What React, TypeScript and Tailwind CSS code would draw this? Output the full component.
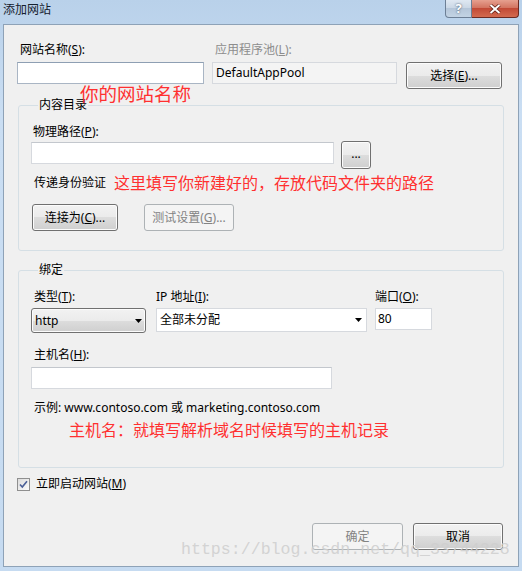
import React from "react";

const Arrow = () => (
  <svg width="7" height="4" viewBox="0 0 7 4" className="shrink-0">
    <path d="M0 0h7L3.5 4z" fill="#000" />
  </svg>
);

const Btn = ({
  children,
  className = "",
  disabled = false,
}: {
  children: React.ReactNode;
  className?: string;
  disabled?: boolean;
}) => (
  <button
    disabled={disabled}
    className={
      disabled
        ? `flex items-center justify-center rounded-[3px] border border-[#adb2b5] bg-[#f4f4f4] text-[#838383] ${className}`
        : `flex items-center justify-center rounded-[3px] border border-[#707070] bg-[linear-gradient(#f2f2f2,#ebebeb_50%,#dddddd_50%,#cfcfcf)] shadow-[inset_0_0_0_1px_#fcfcfc] text-black ${className}`
    }
  >
    {children}
  </button>
);

export default function App() {
  return (
    <div className="relative flex h-[571px] w-[522px] flex-col overflow-hidden bg-[linear-gradient(#b9d1ea,#cadef3_20%,#c6dbf1)] font-['Noto_Sans','Noto_Sans_CJK_SC',sans-serif] text-[12px] text-black">
      {/* title bar */}
      <div className="flex h-[24px] items-start">
        <span className="ml-[3px] mt-[2px] leading-[16px] text-[#15202e]">添加网站</span>
        <div className="ml-auto mr-[3px] flex">
          <div className="flex h-[18px] w-[27px] items-center justify-center rounded-bl-[4px] border border-t-0 border-[#6d7f95] bg-[linear-gradient(#dfe8f2,#c9d6e4_50%,#b5c6d9_50%,#c3d3e4)] text-[13px] font-bold leading-none text-white [text-shadow:0_0_2px_#2c3e55]">
            ?
          </div>
          <div className="flex h-[18px] w-[47px] items-center justify-center rounded-br-[4px] border border-l-0 border-t-0 border-[#6b2a22] bg-[linear-gradient(#e6a08f,#d1705c_50%,#c24a36_50%,#d36a4f)]">
            <svg width="12" height="10" viewBox="0 0 12 10">
              <path d="M1.5 1l9 8M10.5 1l-9 8" stroke="#5a1a10" strokeWidth="3.4" />
              <path d="M1.5 1l9 8M10.5 1l-9 8" stroke="#fff" strokeWidth="2" />
            </svg>
          </div>
        </div>
      </div>

      {/* client area */}
      <div className="mx-[3px] mb-[4px] flex-1 border border-[#8ea2b7] bg-[#f0f0f0] pl-[13px] pr-[15px] pt-[17px]">
        {/* name / app pool */}
        <div className="flex">
          <div className="flex w-[187px] flex-col">
            <span className="pl-[3px] leading-[16px]">
              网站名称(<u>S</u>):
            </span>
            <div className="mt-[4px] h-[22px] border border-[#a9b5c4] border-t-[#8e9fb3] bg-white" />
          </div>
          <div className="ml-[8px] flex w-[185px] flex-col">
            <span className="pl-[3px] leading-[16px] text-[#8d8d8d]">
              应用程序池(<u>L</u>):
            </span>
            <div className="mt-[4px] flex h-[22px] items-center border border-[#d6d9de] bg-[#f4f4f4] pl-[3px]">
              DefaultAppPool
            </div>
          </div>
          <div className="ml-[9px] w-[96px]">
            <Btn className="mt-[20px] h-[27px] w-[96px]">
              选择(<u>E</u>)...
            </Btn>
          </div>
        </div>

        {/* content directory */}
        <fieldset className="ml-[1px] mt-[8px] w-[486px] rounded-[3px] border border-[#d5dfe5] pb-[19px] pl-[12px]">
          <legend className="ml-[7px] px-[1px] leading-[16px]">内容目录</legend>
          <div className="pl-[2px] pt-[11px] leading-[16px]">
            物理路径(<u>P</u>):
          </div>
          <div className="mt-[1px] flex items-start">
            <div className="mt-[1px] h-[22px] w-[303px] border border-[#d6d9de] border-t-[#c3c7cd] bg-white" />
            <Btn className="ml-[7px] h-[28px] w-[30px] pb-[3px] leading-none">...</Btn>
          </div>
          <div className="mt-[3px] flex h-[22px] items-center">
            <span className="ml-[3px] leading-[16px]">传递身份验证</span>
            <span className="ml-[8px] text-[16px] leading-[22px] text-[#ff3030]">
              这里填写你新建好的，存放代码文件夹的路径
            </span>
          </div>
          <div className="mt-[10px] flex">
            <Btn className="ml-[1px] h-[27px] w-[86px]">
              连接为(<u>C</u>)...
            </Btn>
            <Btn disabled className="ml-[26px] h-[27px] w-[90px]">
              测试设置(<u>G</u>)...
            </Btn>
          </div>
        </fieldset>

        {/* binding */}
        <fieldset className="ml-[1px] mt-[11px] w-[486px] rounded-[3px] border border-[#d5dfe5] pb-[26px] pl-[12px]">
          <legend className="ml-[7px] px-[1px] leading-[16px]">绑定</legend>
          <div className="flex pt-[11px]">
            <div className="flex w-[115px] flex-col">
              <span className="pl-[3px] leading-[16px]">
                类型(<u>T</u>):
              </span>
              <div className="mt-[3px] flex h-[25px] items-center justify-between rounded-[3px] border border-[#707070] bg-[linear-gradient(#f2f2f2,#ebebeb_50%,#dddddd_50%,#cfcfcf)] pl-[3px] pr-[3px] shadow-[inset_0_0_0_1px_#fcfcfc]">
                <span>http</span>
                <Arrow />
              </div>
            </div>
            <div className="ml-[10px] flex w-[211px] flex-col">
              <span className="leading-[16px]">
                IP 地址(<u>I</u>):
              </span>
              <div className="mt-[3px] flex h-[24px] items-center justify-between border border-[#d6d9de] bg-white pl-[3px] pr-[4px]">
                <span>全部未分配</span>
                <Arrow />
              </div>
            </div>
            <div className="ml-[8px] flex w-[57px] flex-col">
              <span className="leading-[16px]">
                端口(<u>O</u>):
              </span>
              <div className="mt-[3px] flex h-[22px] items-center border border-[#d6d9de] bg-white pl-[2px]">
                80
              </div>
            </div>
          </div>
          <div className="mt-[14px] pl-[3px] leading-[16px]">
            主机名(<u>H</u>):
          </div>
          <div className="mt-[4px] h-[22px] w-[301px] border border-[#d6d9de] border-t-[#c3c7cd] bg-white" />
          <div className="mt-[11px] pl-[3px] leading-[16px]">
            示例: www.contoso.com 或 marketing.contoso.com
          </div>
          <div className="ml-[38px] mt-[3px] text-[16px] leading-[22px] text-[#ff3030]">
            主机名：就填写解析域名时候填写的主机记录
          </div>
        </fieldset>

        {/* start now */}
        <div className="mt-[8px] flex h-[16px] items-center">
          <span className="flex h-[13px] w-[13px] items-center justify-center border border-[#8f8f8f] bg-[linear-gradient(135deg,#dcdcdc,#fbfbfb)]">
            <svg width="9" height="9" viewBox="0 0 9 9">
              <path d="M1 4.5l2.3 2.6L8 1.2" fill="none" stroke="#4a5f97" strokeWidth="1.6" />
            </svg>
          </span>
          <span className="ml-[6px] leading-[16px]">
            立即启动网站(<u>M</u>)
          </span>
        </div>

        {/* dialog buttons */}
        <div className="mt-[31px] flex justify-end">
          <Btn disabled className="h-[27px] w-[91px]">
            确定
          </Btn>
          <Btn className="ml-[10px] h-[27px] w-[90px] border-[#3c3c3c]">取消</Btn>
        </div>
      </div>

      {/* annotation + watermark overlays */}
      <span className="absolute left-[80px] top-[84px] text-[18.5px] leading-[20px] text-[#ff3030]">
        你的网站名称
      </span>
      <span className="pointer-events-none absolute left-[181px] top-[541px] font-['Liberation_Mono',monospace] text-[16.6px] leading-[18px] text-[#cfcfcf]/90">
        https://blog.csdn.net/qq_33744228
      </span>
    </div>
  );
}
